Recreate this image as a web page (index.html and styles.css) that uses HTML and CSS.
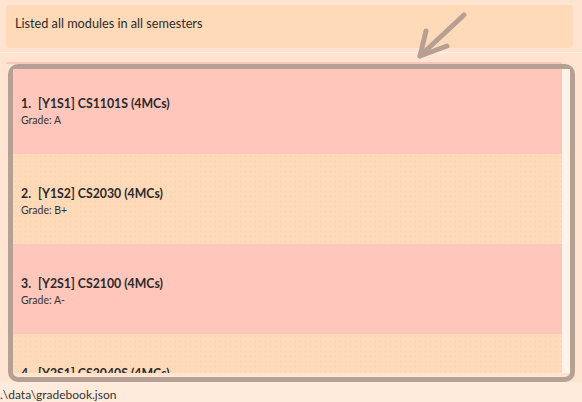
FILE: index.html
```html
<!DOCTYPE html>
<html>
<head>
<meta charset="utf-8">
<link rel="stylesheet" href="styles.css">
</head>
<body>
<div class="app">
  <div class="result-wrap">
    <div class="result">Listed all modules in all semesters</div>
  </div>
  <div class="sep"></div>
  <div class="gap"></div>
  <div class="pink-strip"></div>
  <div class="panel">
    <div class="viewport">
      <div class="cards">
        <div class="card pink first">
          <div class="title"><span class="num">1.</span><span>[Y1S1] CS1101S (4MCs)</span></div>
          <div class="grade">Grade: A</div>
        </div>
        <div class="card peach">
          <div class="title"><span class="num">2.</span><span>[Y1S2] CS2030 (4MCs)</span></div>
          <div class="grade">Grade: B+</div>
        </div>
        <div class="card pink">
          <div class="title"><span class="num">3.</span><span>[Y2S1] CS2100 (4MCs)</span></div>
          <div class="grade">Grade: A-</div>
        </div>
        <div class="card peach">
          <div class="title"><span class="num">4.</span><span>[Y2S1] CS2040S (4MCs)</span></div>
          <div class="grade">Grade: A</div>
        </div>
      </div>
      <div class="scrollbar"></div>
    </div>
  </div>
  <div class="status">.\data\gradebook.json</div>
  <svg class="arrow" width="582" height="80" viewBox="0 0 582 80">
    <g fill="none" stroke="#b5a093" stroke-width="5" stroke-linecap="round" stroke-linejoin="round">
      <line x1="464" y1="15" x2="420" y2="56"/>
      <polyline points="426,31 420,56 447,46"/>
    </g>
  </svg>
</div>
</body>
</html>
```

FILE: styles.css
```css
* { box-sizing: border-box; }
html, body { margin: 0; padding: 0; }
body {
  background: #ffe4d2;
  font-family: Lato, "Open Sans", sans-serif;
  width: 582px;
  height: 402px;
  overflow: hidden;
}
.app {
  position: relative;
  display: flex;
  flex-direction: column;
  height: 402px;
}
.result-wrap {
  padding: 5px 9px 4px 6px;
}
.result {
  height: 43px;
  background: #ffdab9;
  border-radius: 3px;
  padding: 10px 9px;
  font-size: 12.7px;
  color: #2b2b2b;
}
.sep {
  height: 1px;
  background: #fff0e5;
}
.gap { height: 9px; }
.pink-strip {
  height: 2px;
  margin: 0 20px 0 6px;
  background: #ffc6bb;
}
.panel {
  margin-left: 8px;
  width: 567px;
  height: 318px;
  border: 5px solid #b5a093;
  border-radius: 10px;
  background: #ffe4d2;
  padding-bottom: 4px;
}
.viewport {
  display: flex;
  height: 304px;
  overflow: hidden;
}
.cards {
  flex: 1;
  display: flex;
  flex-direction: column;
}
.scrollbar {
  width: 8px;
  background: #fff2e9;
}
.card {
  flex: 0 0 90px;
  padding: 32px 8px 0 8px;
}
.card.first { margin-top: -5px; }
.pink { background: #ffc6bb; }
.peach {
  background-color: #ffdab9;
  background-image: radial-gradient(circle, rgba(236, 180, 150, 0.35) 0.6px, transparent 0.9px);
  background-size: 5px 5px;
}
.title {
  font-size: 12.3px;
  font-weight: 700;
  color: #2a2a2a;
  display: flex;
}
.num { width: 17px; }
.grade {
  font-size: 10.5px;
  color: #333;
  margin-top: 3px;
}
.status {
  flex: 1;
  background: #ffebdc;
  font-size: 12px;
  color: #333;
  padding: 5px 0 0 0;
}
.arrow {
  position: absolute;
  left: 0;
  top: 0;
  pointer-events: none;
}
```
